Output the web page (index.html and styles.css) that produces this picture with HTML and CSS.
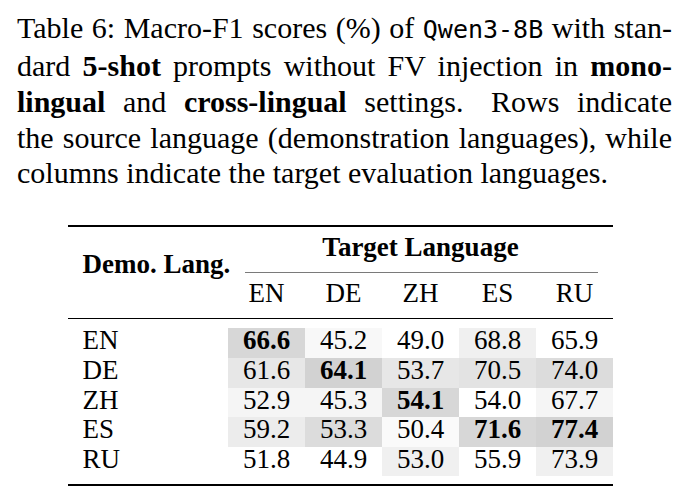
FILE: index.html
```html
<!DOCTYPE html>
<html>
<head>
<meta charset="utf-8">
<link rel="stylesheet" href="styles.css">
</head>
<body>
<div class="caption">
  <div class="line">Table 6: Macro-F1 scores (%) of <span class="mono">Qwen3-8B</span> with stan-</div>
  <div class="line">dard <b>5-shot</b> prompts without FV injection in <b>mono-</b></div>
  <div class="line"><b>lingual</b> and <b>cross-lingual</b> settings.<span class="ss"></span> Rows indicate</div>
  <div class="line">the source language (demonstration languages), while</div>
  <div class="line last">columns indicate the target evaluation languages.</div>
</div>

<div class="tbl">
  <div class="rule thick"></div>
  <div class="head">
    <div class="demo">Demo. Lang.</div>
    <div class="target">Target Language</div>
    <div class="cmid"></div>
    <div class="colh">EN</div>
    <div class="colh">DE</div>
    <div class="colh">ZH</div>
    <div class="colh">ES</div>
    <div class="colh">RU</div>
  </div>
  <div class="rule mid"></div>
  <div class="body">
    <div class="rh">EN</div>
    <div class="c g1 b">66.6</div>
    <div class="c g8">45.2</div>
    <div class="c">49.0</div>
    <div class="c g6">68.8</div>
    <div class="c">65.9</div>

    <div class="rh">DE</div>
    <div class="c g4">61.6</div>
    <div class="c g0 b">64.1</div>
    <div class="c g4">53.7</div>
    <div class="c g3">70.5</div>
    <div class="c g2">74.0</div>

    <div class="rh">ZH</div>
    <div class="c g7">52.9</div>
    <div class="c g7">45.3</div>
    <div class="c g1 b">54.1</div>
    <div class="c">54.0</div>
    <div class="c g7">67.7</div>

    <div class="rh">ES</div>
    <div class="c g5">59.2</div>
    <div class="c g2">53.3</div>
    <div class="c g9">50.4</div>
    <div class="c g1 b">71.6</div>
    <div class="c g0 b">77.4</div>

    <div class="rh">RU</div>
    <div class="c">51.8</div>
    <div class="c">44.9</div>
    <div class="c g6">53.0</div>
    <div class="c">55.9</div>
    <div class="c g6">73.9</div>
  </div>
  <div class="rule thick"></div>
</div>
</body>
</html>
```

FILE: styles.css
```css
html, body {
  margin: 0;
  padding: 0;
  background: #fff;
}
body {
  font-family: "Liberation Serif", "Times New Roman", serif;
  color: #000;
}
.caption {
  padding: 10px 0 0 17px;
  width: 655px;
  font-size: 30px;
  line-height: 35.85px;
}
.line {
  text-align: justify;
  text-align-last: justify;
  white-space: nowrap;
}
.line.last {
  text-align-last: left;
}
.mono {
  font-family: "DejaVu Sans Mono", "Liberation Mono", monospace;
  font-size: 25px;
}
.ss {
  display: inline-block;
  width: 10px;
}
.tbl {
  margin: 34px 0 0 68px;
  width: 545px;
  font-size: 27px;
  line-height: 29.6px;
}
.rule {
  background: #000;
}
.rule.thick {
  height: 2px;
}
.rule.mid {
  height: 1.3px;
}
.head {
  display: grid;
  grid-template-columns: 160px repeat(5, 77px);
  grid-template-rows: 44.7px 1px 44.8px;
}
.demo {
  grid-row: 1 / 4;
  grid-column: 1;
  padding: 22.3px 0 0 14.5px;
  font-weight: bold;
  white-space: nowrap;
}
.target {
  grid-row: 1;
  grid-column: 2 / 7;
  text-align: center;
  padding-top: 6px;
  font-weight: bold;
}
.cmid {
  grid-row: 2;
  grid-column: 2 / 7;
  margin: 0 15px 0 17px;
  background: #7a7a7a;
}
.colh {
  grid-row: 3;
  padding-top: 6.3px;
  text-align: center;
}
.body {
  display: grid;
  grid-template-columns: 160px repeat(5, 77px);
  grid-auto-rows: 29.6px;
  padding: 9.4px 0 8px;
  line-height: 25.6px;
}
.rh {
  padding-left: 14.5px;
}
.c {
  text-align: center;
}
.b { font-weight: bold; }
.g0 { background: #d2d2d2; }
.g1 { background: #d7d7d7; }
.g2 { background: #dcdcdc; }
.g3 { background: #e3e3e3; }
.g4 { background: #e7e7e7; }
.g5 { background: #ececec; }
.g6 { background: #f0f0f0; }
.g7 { background: #f5f5f5; }
.g8 { background: #f8f8f8; }
.g9 { background: #fafafa; }
```
